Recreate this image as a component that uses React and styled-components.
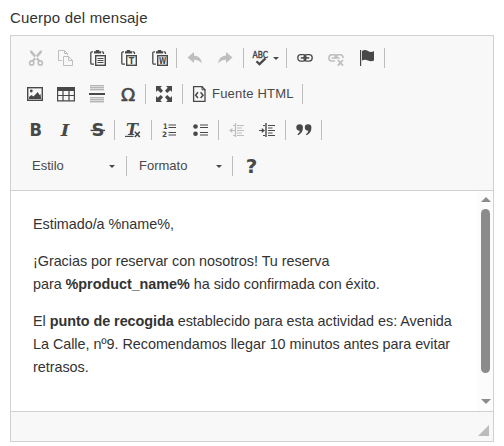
import React from "react";
import styled, { createGlobalStyle } from "styled-components";

const Global = createGlobalStyle`
  body { margin: 0; background: #fff; font-family: "Liberation Sans", Arial, sans-serif; }
  * { box-sizing: border-box; }
`;
const Page = styled.div`
  width: 504px;
  height: 446px;
  padding: 8px 10px 0;
  overflow: hidden;
`;
const Label = styled.label`
  display: block;
  height: 27px;
  font-size: 15px;
  line-height: 20px;
  letter-spacing: 0.19px;
  color: #333;
`;
const Editor = styled.div`
  width: 484px;
  height: 407px;
  border: 1px solid #d1d1d1;
  display: flex;
  flex-direction: column;
`;
const Toolbar = styled.div`
  height: 155px;
  flex: none;
  padding-top: 4px;
  background: #f8f8f8;
  border-bottom: 1px solid #d1d1d1;
`;
const Row = styled.div`
  display: flex;
  align-items: center;
  height: 36px;
`;
const Button = styled.button`
  display: flex;
  align-items: center;
  flex: none;
  height: 28px;
  width: ${(p) => p.$w || 16}px;
  margin: 0 0 0 ${(p) => p.$gap}px;
  padding: 0;
  border: 0;
  background: none;
  color: #484848;
  opacity: ${(p) => (p.$off ? 0.32 : 1)};
`;
const Glyph = styled.svg`
  display: block;
  flex: none;
  overflow: visible;
`;
const Separator = styled.span`
  flex: none;
  width: 1px;
  height: 20px;
  margin-left: ${(p) => p.$gap}px;
  background: #bcbcbc;
`;
const Caption = styled.span`
  font-size: 13px;
  letter-spacing: ${(p) => p.$track || 0}px;
  line-height: 16px;
  padding-bottom: 1px;
  color: #484848;
  white-space: nowrap;
  margin-left: ${(p) => p.$gap || 0}px;
`;
const Combo = styled.button`
  display: flex;
  align-items: center;
  justify-content: space-between;
  flex: none;
  height: 28px;
  width: ${(p) => p.$w}px;
  margin: 0 0 0 ${(p) => p.$gap}px;
  padding: 0;
  border: 0;
  background: none;
  text-align: left;
`;
const Caret = styled.span`
  width: 0;
  border: 3px solid transparent;
  border-top-color: #484848;
  border-bottom: 0;
  margin-top: 1px;
  margin-left: ${(p) => p.$gap || 0}px;
`;
const Content = styled.div`
  display: flex;
  flex: 1;
  background: #fff;
`;
const Message = styled.div`
  flex: 1;
  padding: 22px 0 0 22px;
  font-size: 14.4px;
  line-height: 23px;
  letter-spacing: -0.04px;
  color: #333;
  white-space: nowrap;
`;
const Paragraph = styled.p`
  margin: 0 0 14px;
`;
const Scrollbar = styled.div`
  width: 15px;
  background: #fcfcfc;
  display: flex;
  flex-direction: column;
  align-items: center;
  padding-top: 6px;
`;
const Arrow = styled.span`
  width: 0;
  border: 5px solid transparent;
  ${(p) => (p.$down ? "border-top-color: #8b8b8b; border-bottom: 0;" : "border-bottom-color: #8b8b8b; border-top: 0;")}
`;
const Thumb = styled.span`
  width: 9px;
  height: 164px;
  margin: 7px 0 26px;
  border-radius: 5px;
  background: #8b8b8b;
`;
const Footer = styled.div`
  height: 30px;
  flex: none;
  display: flex;
  justify-content: flex-end;
  align-items: flex-end;
  padding: 0 4px 5px 0;
  background: #f8f8f8;
  border-top: 1px solid #d1d1d1;
`;
const Grip = styled.span`
  width: 0;
  border-left: 11px solid transparent;
  border-bottom: 11px solid #bcbcbc;
`;

const SANS = "DejaVu Sans, sans-serif";
const SERIF = "DejaVu Serif, serif";
const line = { fill: "none", stroke: "currentColor" };

const Clipboard = ({ children }) => (
  <>
    <path d="M3 1.8H1.8Q.8 1.8.8 3v10q0 1.2 1.2 1.2H4M11.5 1.8h1q1 0 1 1.2V4" {...line} strokeWidth="1.3" />
    <path d="M4 3.5V1.3h1.8V0h3.4v1.3H11v2.2z" fill="currentColor" />
    <rect x="5.7" y="5.7" width="9.6" height="9.6" {...line} strokeWidth="1.4" />
    {children}
  </>
);

const drawings = {
  cut: (
    <>
      <path d="M2.2.2 4 .8l8.2 9.7-2 1L2 2.5zM13.8.2 12 .8l-8.2 9.7 2 1L14 2.5z" fill="currentColor" />
      <circle cx="3.7" cy="13" r="2.1" {...line} strokeWidth="1.6" />
      <circle cx="12.3" cy="13" r="2.1" {...line} strokeWidth="1.6" />
    </>
  ),
  copy: (
    <>
      <path d="M5 10.5H1.5v-10h6l3 3V5M7.5.5v3h3" {...line} />
      <path d="M6.5 6.5h5l4 4v5h-9zM11.5 6.5v4h4" {...line} />
    </>
  ),
  paste: <Clipboard><path d="M7.5 8.5h6M7.5 10.5h6M7.5 12.5h6" {...line} /></Clipboard>,
  pasteText: <Clipboard><text x="10.5" y="13.5" textAnchor="middle" fontFamily={SANS} fontWeight="700" fontSize="8" fill="currentColor">T</text></Clipboard>,
  pasteWord: <Clipboard><text x="6.9" y="13.5" fontFamily={SANS} fontWeight="700" fontSize="8" textLength="7.2" lengthAdjust="spacingAndGlyphs" fill="currentColor">W</text></Clipboard>,
  undo: <path d="M.5 7.5 7 2v3.5q7 .4 8 8Q12 9.6 7 9.7V13z" fill="currentColor" />,
  redo: <path d="M15.5 7.5 9 2v3.5q-7 .4-8 8 3-3.9 8-3.8V13z" fill="currentColor" />,
  spell: (
    <>
      <text x="0.5" y="8" fontFamily={SANS} fontSize="9.5" textLength="15.5" lengthAdjust="spacingAndGlyphs" fill="currentColor" stroke="currentColor" strokeWidth=".5">ABC</text>
      <path d="m4.5 11.2 3 3L13.5 8.4" {...line} strokeWidth="2.3" />
    </>
  ),
  link: (
    <>
      <rect x=".8" y="4.7" width="8.2" height="6.4" rx="3" {...line} strokeWidth="1.3" />
      <rect x="7" y="4.7" width="8.2" height="6.4" rx="3" {...line} strokeWidth="1.3" />
      <path d="M3.7 7.9h8.6" {...line} strokeWidth="1.5" />
    </>
  ),
  unlink: (
    <>
      <path d="M7 11H4Q.9 11 .9 7.9T4 4.7h2q3 0 3 3M7 7.8q0-3.1 3-3.1h2q3.1 0 3.1 3.2M3.7 7.9h8" {...line} strokeWidth="1.5" />
      <path d="m9.8 10 5.2 5.6M15 10l-5.2 5.6" {...line} strokeWidth="1.8" />
    </>
  ),
  flag: <path d="M1 0h1.2v16H1zM3 1q3-1.8 6 0t6 0v9.5q-3 1.6-6 0t-6 0z" fill="currentColor" />,
  image: (
    <>
      <rect x=".7" y="1.7" width="14.6" height="12.6" {...line} strokeWidth="1.4" />
      <circle cx="4.3" cy="5" r="1.4" fill="currentColor" />
      <path d="M2 13v-2l2.5-2 2 1.5L10.7 6l1.8 3 1-1 .7 5z" fill="currentColor" />
    </>
  ),
  table: (
    <>
      <path d="M0 1h18v4H0z" fill="currentColor" />
      <path d="M.6 4v10.9h16.8V4M0 9.5h18M6 4v11M12 4v11" {...line} strokeWidth="1.2" />
    </>
  ),
  rule: (
    <>
      <path d="M1 0h14M1 2h14M1 4h14M1 12h14M1 14h14M1 16h14" {...line} opacity=".55" transform="translate(0 -.2)" />
      <path d="M0 7h16v2H0z" fill="currentColor" />
    </>
  ),
  omega: <text x="8" y="14.8" textAnchor="middle" fontFamily={SANS} fontWeight="400" fontSize="18.5" fill="currentColor" stroke="currentColor" strokeWidth=".65">Ω</text>,
  maximize: (
    <path d="M0 0h6L4.3 1.7 7 4.8 4.8 7 1.7 4.3 0 6zM16 0v6l-1.7-1.7L11.2 7 9 4.8l2.7-3.1L10 0zM0 16v-6l1.7 1.7L4.8 9 7 11.2l-2.7 3.1L6 16zM16 16h-6l1.7-1.7L9 11.2 11.2 9l3.1 2.7L16 10z" fill="currentColor" />
  ),
  source: (
    <>
      <path d="M1.6.7H10l3 3v11.6H1.6z" {...line} strokeWidth="1.3" />
      <path d="M10 0v3.8h3.5" {...line} />
      <path d="M6 6.3 3.6 9.2 6 12M8.6 6.3 11 9.2 8.6 12" {...line} strokeWidth="1.5" />
    </>
  ),
  bold: <text x="1.6" y="14.2" fontFamily={SANS} fontWeight="700" fontSize="17" textLength="12.5" lengthAdjust="spacingAndGlyphs" fill="currentColor">B</text>,
  italic: <text x="2.8" y="14.2" fontFamily={SERIF} fontWeight="700" fontStyle="italic" fontSize="17" textLength="8.5" lengthAdjust="spacingAndGlyphs" fill="currentColor">I</text>,
  strike: (
    <>
      <text x="1.4" y="14.2" fontFamily={SANS} fontWeight="700" fontSize="17" textLength="13" lengthAdjust="spacingAndGlyphs" fill="currentColor">S</text>
      <path d="M.5 8.4h14.5" {...line} strokeWidth="1.4" />
    </>
  ),
  clear: (
    <>
      <text x="1" y="13" fontFamily={SERIF} fontWeight="700" fontStyle="italic" fontSize="16" textLength="12" lengthAdjust="spacingAndGlyphs" fill="currentColor">T</text>
      <path d="M0 14.4h8.5" {...line} strokeWidth="1.2" />
      <path d="m9.8 9.8 5 5.2M14.8 9.8l-5 5.2" {...line} strokeWidth="1.6" />
    </>
  ),
  numbers: (
    <>
      <text x="1" y="7" fontFamily={SANS} fontWeight="700" fontSize="7.5" textLength="4.5" lengthAdjust="spacingAndGlyphs" fill="currentColor">1</text>
      <text x="0" y="15" fontFamily={SANS} fontWeight="700" fontSize="7.5" textLength="5" lengthAdjust="spacingAndGlyphs" fill="currentColor">2</text>
      <path d="M6.5 3h7.5M6.5 5.5h7.5M6.5 10.5h7.5M6.5 13h7.5" {...line} strokeWidth="1.2" />
    </>
  ),
  bullets: (
    <>
      <circle cx="2.5" cy="4.5" r="2.3" fill="currentColor" />
      <circle cx="2.5" cy="11.8" r="2.3" fill="currentColor" />
      <path d="M7 3h8M7 5.5h8M7 10.5h8M7 13h8" {...line} strokeWidth="1.2" />
    </>
  ),
  outdent: (
    <>
      <path d="M6.5 1v14" {...line} strokeWidth="1.3" />
      <path d="M4 3.5h2M8 3.5h7M8 6h5M8 8.5h7M8 11h5M4 13.5h2M8 13.5h7M2 8.5h4" {...line} strokeWidth="1.2" />
      <path d="M0 8.5 3.4 6v5z" fill="currentColor" />
    </>
  ),
  indent: (
    <>
      <path d="M7 1v14" {...line} strokeWidth="1.4" />
      <path d="M4 3.5h2M9 3.5h7M9 6h4.5M9 8.5h7M9 11h4.5M4 13.5h2M9 13.5h7M0 8.5h5" {...line} strokeWidth="1.2" />
      <path d="M6 8.5 2.8 6v5z" fill="currentColor" />
    </>
  ),
  quote: <path d="M.3 5.6a3.3 3.3 0 1 1 6.6 0q.2 5.4-4.7 7.7l-.8-1Q3.7 10.8 3.8 8.7.3 8.8.3 5.6zM8.8 5.6a3.3 3.3 0 1 1 6.6 0q.2 5.4-4.7 7.7l-.8-1q2.3-1.5 2.4-3.6-3.5.1-3.5-3.1z" fill="currentColor" />,
  help: <text x="7.5" y="15.2" textAnchor="middle" fontFamily={SANS} fontWeight="700" fontSize="20" fill="currentColor">?</text>,
};

const Tool = ({ name, gap, off, w = 16, title }) => (
  <Button $gap={gap} $off={off} $w={w} aria-label={title} disabled={off}>
    <Glyph width={w} height="16" viewBox={`0 0 ${w} 16`}>{drawings[name]}</Glyph>
  </Button>
);

export default function App() {
  return (
    <Page>
      <Global />
      <Label>Cuerpo del mensaje</Label>
      <Editor>
        <Toolbar>
          <Row>
            <Tool name="cut" title="Cortar" gap={17} off />
            <Tool name="copy" title="Copiar" gap={13} off />
            <Tool name="paste" title="Pegar" gap={17} />
            <Tool name="pasteText" title="Pegar texto" gap={15} />
            <Tool name="pasteWord" title="Pegar desde Word" gap={15} />
            <Separator $gap={8} />
            <Tool name="undo" title="Deshacer" gap={10} off />
            <Tool name="redo" title="Rehacer" gap={14} off />
            <Separator $gap={10} />
            <Tool name="spell" title="Ortografía" gap={8} />
            <Caret $gap={5} />
            <Separator $gap={7} />
            <Tool name="link" title="Vínculo" gap={10} />
            <Tool name="unlink" title="Quitar vínculo" gap={15} off />
            <Tool name="flag" title="Ancla" gap={15} />
            <Separator $gap={9} />
          </Row>
          <Row>
            <Tool name="image" title="Imagen" gap={16} />
            <Tool name="table" title="Tabla" gap={14} w={18} />
            <Tool name="rule" title="Línea horizontal" gap={14} />
            <Tool name="omega" title="Símbolo" gap={15} />
            <Separator $gap={9} />
            <Tool name="maximize" title="Maximizar" gap={10} />
            <Separator $gap={10} />
            <Button $gap={9} $w={102}>
              <Glyph width="16" height="16" viewBox="0 0 16 16">{drawings.source}</Glyph>
              <Caption $gap={4} $track={0.2}>Fuente HTML</Caption>
            </Button>
            <Separator $gap={8} />
          </Row>
          <Row>
            <Tool name="bold" title="Negrita" gap={17} />
            <Tool name="italic" title="Cursiva" gap={14} />
            <Tool name="strike" title="Tachado" gap={16} />
            <Separator $gap={8} />
            <Tool name="clear" title="Quitar formato" gap={10} />
            <Separator $gap={10} />
            <Tool name="numbers" title="Lista numerada" gap={10} />
            <Tool name="bullets" title="Lista" gap={15} />
            <Separator $gap={9} />
            <Tool name="outdent" title="Reducir sangría" gap={10} off />
            <Tool name="indent" title="Aumentar sangría" gap={14} />
            <Separator $gap={10} />
            <Tool name="quote" title="Cita" gap={10} />
            <Separator $gap={9} />
          </Row>
          <Row>
            <Combo $gap={21} $w={83}>
              <Caption>Estilo</Caption>
              <Caret />
            </Combo>
            <Separator $gap={11} />
            <Combo $gap={12} $w={83}>
              <Caption>Formato</Caption>
              <Caret />
            </Combo>
            <Separator $gap={10} />
            <Tool name="help" title="Ayuda" gap={11} />
          </Row>
        </Toolbar>
        <Content>
          <Message>
            <Paragraph>Estimado/a %name%,</Paragraph>
            <Paragraph>
              ¡Gracias por reservar con nosotros! Tu reserva<br />
              para <b>%product_name%</b> ha sido confirmada con éxito.
            </Paragraph>
            <Paragraph>
              El <b>punto de recogida</b> establecido para esta actividad es: Avenida<br />
              La Calle, nº9. Recomendamos llegar 10 minutos antes para evitar<br />
              retrasos.
            </Paragraph>
          </Message>
          <Scrollbar>
            <Arrow />
            <Thumb />
            <Arrow $down />
          </Scrollbar>
        </Content>
        <Footer><Grip /></Footer>
      </Editor>
    </Page>
  );
}
